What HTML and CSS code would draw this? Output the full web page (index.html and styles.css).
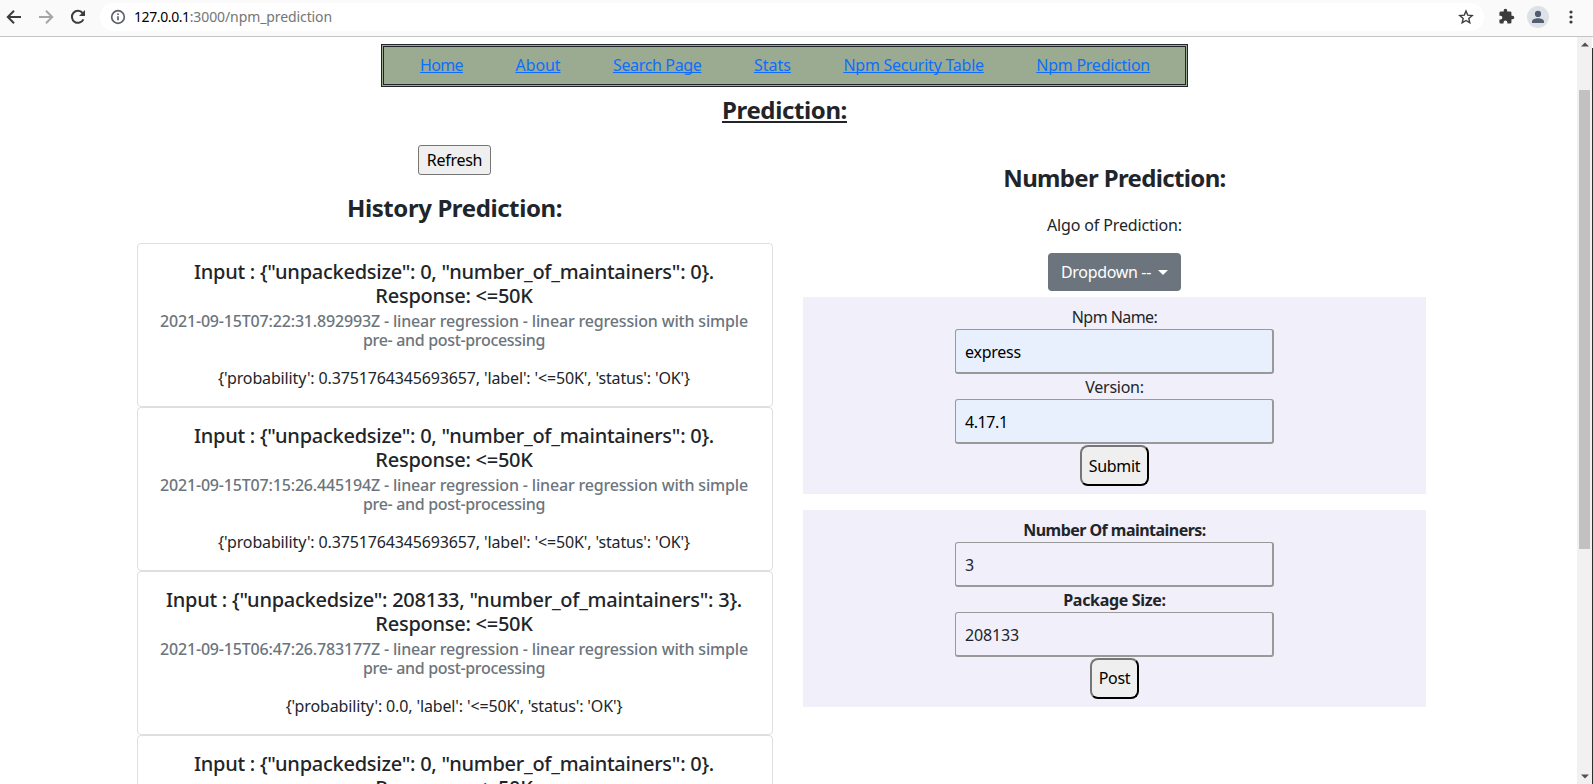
FILE: index.html
```html
<!DOCTYPE html>
<html lang="en">
<head>
<meta charset="utf-8">
<title>Npm Prediction</title>
<link rel="stylesheet" href="styles.css">
</head>
<body>
<header class="toolbar">
  <svg class="icon back" viewBox="0 0 16 16"><path d="M15 8H2M8 1.7 1.8 8 8 14.3"/></svg>
  <svg class="icon forward" viewBox="0 0 16 16"><path d="M1 8h13M8 1.7 14.2 8 8 14.3"/></svg>
  <svg class="icon reload" viewBox="0 0 16 16"><path d="M13.4 10.3A6 6 0 1 1 12.6 4"/><path class="fill" d="M15 1v6H9z"/></svg>
  <div class="address">
    <svg class="info" viewBox="0 0 16 16"><circle cx="8" cy="8" r="6.3"/><path d="M8 7.2v4.1M8 4.4v1.7"/></svg>
    <span class="url"><span class="host">127.0.0.1</span><span class="path">:3000/npm_prediction</span></span>
    <svg class="star" viewBox="0 0 16 16"><path d="m8 2 1.7 4.1 4.5.4-3.4 2.9 1 4.4L8 11.5l-3.8 2.3 1-4.4-3.4-2.9 4.5-.4z"/></svg>
  </div>
  <svg class="puzzle" viewBox="0 0 24 24"><path d="M20.5 11H19V7a2 2 0 0 0-2-2h-4V3.500a2.500 2.500 0 0 0-5 0V5H4a2 2 0 0 0-2 2v3.800h1.500a2.700 2.700 0 0 1 0 5.400H2V20a2 2 0 0 0 2 2h3.800v-1.500a2.700 2.700 0 0 1 5.400 0V22H17a2 2 0 0 0 2-2v-4h1.500a2.500 2.500 0 0 0 0-5z"/></svg>
  <svg class="avatar" viewBox="0 0 22 22"><circle class="disc" cx="11" cy="11" r="11"/><circle cx="11" cy="7.900" r="3.100"/><path d="M5 17v-1.500c0-2 3.500-3.200 6-3.200s6 1.200 6 3.200V17z"/></svg>
  <svg class="dots" viewBox="0 0 4 14"><circle cx="2" cy="2" r="1.600"/><circle cx="2" cy="7" r="1.600"/><circle cx="2" cy="12" r="1.600"/></svg>
</header>
<div class="viewport">
  <main class="page">
    <nav class="nav">
      <a class="nav-home" href="#">Home</a>
      <a class="nav-about" href="#">About</a>
      <a class="nav-search" href="#">Search Page</a>
      <a href="#">Stats</a>
      <a class="nav-table" href="#">Npm Security Table</a>
      <a class="nav-predict" href="#">Npm Prediction</a>
    </nav>
    <h3 class="title">Prediction:</h3>
    <div class="columns">
      <section class="history">
        <button class="refresh">Refresh</button>
        <h3>History Prediction:</h3>
        <article class="card">
          <h5>Input : {"unpackedsize": 0, "number_of_maintainers": 0}.<br>Response: &lt;=50K</h5>
          <h6>2021-09-15T07:22:31.892993Z - linear regression - linear regression with simple<br><span class="tail">pre- and post-processing</span></h6>
          <p>{'probability': 0.3751764345693657, 'label': '&lt;=50K', 'status': 'OK'}</p>
        </article>
        <article class="card">
          <h5>Input : {"unpackedsize": 0, "number_of_maintainers": 0}.<br>Response: &lt;=50K</h5>
          <h6>2021-09-15T07:15:26.445194Z - linear regression - linear regression with simple<br><span class="tail">pre- and post-processing</span></h6>
          <p>{'probability': 0.3751764345693657, 'label': '&lt;=50K', 'status': 'OK'}</p>
        </article>
        <article class="card">
          <h5>Input : {"unpackedsize": 208133, "number_of_maintainers": 3}.<br>Response: &lt;=50K</h5>
          <h6>2021-09-15T06:47:26.783177Z - linear regression - linear regression with simple<br><span class="tail">pre- and post-processing</span></h6>
          <p>{'probability': 0.0, 'label': '&lt;=50K', 'status': 'OK'}</p>
        </article>
        <article class="card">
          <h5>Input : {"unpackedsize": 0, "number_of_maintainers": 0}.<br>Response: &lt;=50K</h5>
        </article>
      </section>
      <section class="predict">
        <h3>Number Prediction:</h3>
        <p class="algo">Algo of Prediction:</p>
        <button class="dropdown">Dropdown --<span class="caret"></span></button>
        <form class="panel">
          <label class="l-name">Npm Name:</label>
          <input class="filled" value="express">
          <label class="l-version">Version:</label>
          <input class="filled version" value="4.17.1">
          <button type="button">Submit</button>
        </form>
        <form class="panel numbers">
          <label class="l-maint">Number Of maintainers:</label>
          <input value="3">
          <label class="l-size">Package Size:</label>
          <input value="208133">
          <button type="button">Post</button>
        </form>
      </section>
    </div>
  </main>
  <aside class="scrollbar">
    <svg class="arrow" viewBox="0 0 8 5"><path d="M0 4.500 4 .5l4 4z"/></svg>
    <div class="thumb"></div>
    <svg class="arrow down" viewBox="0 0 8 5"><path d="M0 .5h8l-4 4z"/></svg>
  </aside>
  <div class="edge"></div>
</div>
</body>
</html>
```
FILE: styles.css
```css
* { box-sizing: border-box; }
body {
  margin: 0;
  height: 784px;
  overflow: hidden;
  display: flex;
  flex-direction: column;
  font: 16px/24px "Noto Sans", sans-serif;
  color: #212529;
  background: #fff;
}
h3, h5, h6, p { margin: 0; }
button, input { font: inherit; }

/* browser toolbar */
.toolbar {
  flex: none;
  height: 37px;
  display: flex;
  align-items: center;
  padding: 0 20.500px 3px 6px;
  background: #fafafa;
  border-bottom: 1px solid #c4c4c4;
}
.icon {
  width: 16px;
  height: 16px;
  margin-right: 16px;
  fill: none;
  stroke: #3c3c3c;
  stroke-width: 2;
}
.icon .fill { fill: #3c3c3c; stroke: none; }
.forward { stroke: #a6a6a6; }
.reload { margin-right: 14px; }
.address {
  flex: 1;
  height: 28px;
  display: flex;
  align-items: center;
  padding: 0 10px;
  border-radius: 14px;
  background: #fff;
}
.info { width: 16px; height: 16px; fill: none; stroke: #5f6368; stroke-width: 1.700; }
.url { flex: 1; margin-left: 8px; font-size: 14px; letter-spacing: -0.1px; }
.host { color: #000; letter-spacing: -0.4px; }
.path { color: #757575; }
.star { width: 16px; height: 16px; fill: none; stroke: #3c3c3c; stroke-width: 1.400; }
.puzzle { width: 17px; height: 17px; margin-left: 14px; fill: #3c3c3c; }
.avatar { width: 22px; height: 22px; margin-left: 12px; fill: #525d70; }
.avatar .disc { fill: #dee1e6; }
.dots { width: 4px; height: 14px; margin-left: 20px; fill: #3c3c3c; }

.viewport { flex: 1; min-height: 0; display: flex; }
.page { flex: 1; padding-top: 7px; overflow: hidden; }

.nav {
  width: 807px;
  height: 43px;
  margin-left: 381px;
  padding: 6px 35px 7px 36px;
  display: flex;
  justify-content: space-between;
  border: 3px double #212529;
  background: #9aab91;
}
.nav a {
  color: #0d6efd;
  text-decoration: underline 1px;
  text-underline-offset: 1px;
  text-decoration-skip-ink: none;
}
.nav-home { letter-spacing: -0.63px; }
.nav-about { letter-spacing: -0.08px; }
.nav-search { letter-spacing: -0.35px; }
.nav-table, .nav-predict { letter-spacing: -0.25px; }

h3 { font-size: 24px; line-height: 29px; font-weight: 700; text-align: center; }
.title {
  width: 807px;
  margin: 8px 0 21px 381px;
  letter-spacing: -0.38px;
  text-decoration: underline 2px;
  text-underline-offset: 2px;
}

.columns {
  display: grid;
  grid-template-columns: 636px 623px;
  gap: 30px;
  margin-left: 137px;
  text-align: center;
}
.history h3 { margin: 18px 1px 21px 0; letter-spacing: -0.41px; }
.refresh {
  display: block;
  width: 73px;
  height: 30px;
  margin: 0 0 0 281px;
  padding: 0;
  border: 1px solid #767676;
  border-radius: 3px;
  background: #efefef;
  color: #000;
  letter-spacing: -0.27px;
}
.card {
  height: 164px;
  padding: 16px 17px 16px 15px;
  border: 1px solid #dfdfdf;
  border-radius: 4px;
}
.card h5 { font-size: 20px; line-height: 24px; font-weight: 500; letter-spacing: -0.26px; }
.card h6 {
  margin: 4px 0 16px;
  font-size: 16px;
  line-height: 19px;
  font-weight: 500;
  color: #6c757d;
  letter-spacing: -0.17px;
  white-space: nowrap;
}
.tail { letter-spacing: -0.33px; }
.card p { letter-spacing: -0.14px; }

.predict h3 { margin-top: 18px; letter-spacing: -0.65px; }
.algo { margin: 21px 0 16px; letter-spacing: -0.15px; }
.dropdown {
  display: flex;
  align-items: center;
  width: 133px;
  height: 38px;
  margin: 0 auto 6px;
  padding: 0 13px;
  border: 0;
  border-radius: 4px;
  background: #6c757d;
  color: #fff;
  letter-spacing: -0.33px;
}
.caret {
  margin-left: 7px;
  border: 5px solid transparent;
  border-top-color: #fff;
  border-bottom: 0;
}
.panel {
  display: flex;
  flex-direction: column;
  align-items: center;
  height: 197px;
  margin-bottom: 16px;
  padding-top: 8px;
  background: #f1effa;
}
.panel input {
  width: 319px;
  height: 45px;
  margin-bottom: 1px;
  padding: 2px 10px 0 9px;
  border: solid #999;
  border-width: 1px 2px 2px 1px;
  border-radius: 3px;
  background: transparent;
  color: #212529;
  letter-spacing: -0.15px;
}
.panel .filled { background: #e8f0fe; color: #000; letter-spacing: -0.24px; }
.panel .version { letter-spacing: -0.42px; }
.panel button {
  height: 41px;
  padding: 0 7px;
  border: 2px outset #000;
  border-color: #767676 #212121 #212121 #767676;
  border-radius: 8px;
  background: #efefef;
  color: #000;
  letter-spacing: -0.32px;
}
.numbers button { padding-bottom: 2px; }
.numbers label { font-weight: 700; }
.l-name { letter-spacing: -0.56px; }
.l-version { letter-spacing: -0.26px; }
.l-maint { letter-spacing: -0.54px; }
.l-size { letter-spacing: -0.32px; }

/* page scrollbar */
.scrollbar {
  width: 15px;
  display: flex;
  flex-direction: column;
  align-items: center;
  padding: 5px 0;
  background: #f1f1f1;
}
.arrow { width: 8px; height: 5px; fill: #505050; }
.thumb { width: 11px; height: 459px; margin-top: 43px; background: #c1c1c1; }
.down { margin-top: auto; }
.edge { width: 1px; margin-top: 11px; background: #2d2d2d; }
```
